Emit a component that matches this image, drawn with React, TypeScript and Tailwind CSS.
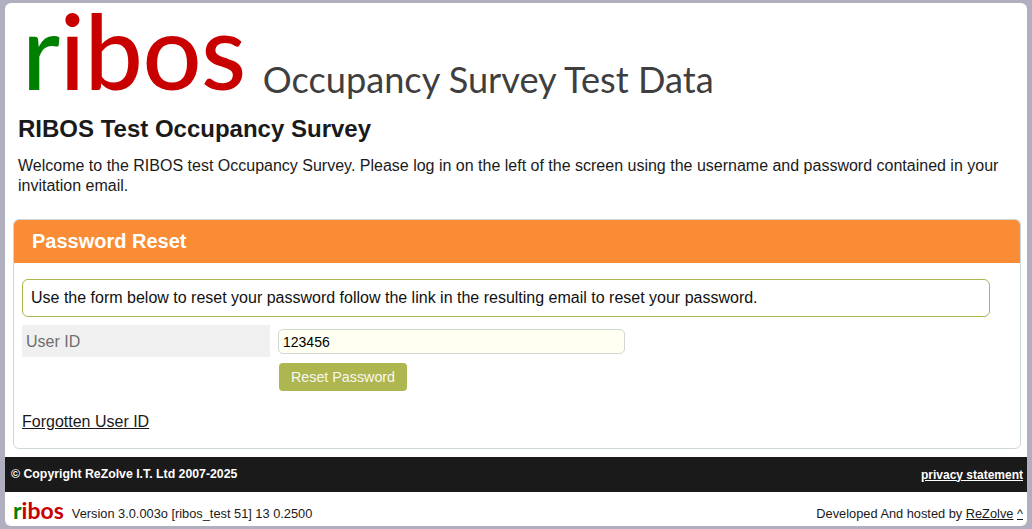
import React from 'react'

const sans = "font-['Liberation_Sans',Arial,sans-serif]"

const Logo = () => (
    <div className="flex h-[112px] shrink-0 items-baseline pl-[17px] font-['Lato','Open_Sans',sans-serif] whitespace-nowrap">
        <div className="text-[104px] leading-[93px] font-medium text-[#c80000] tracking-[-0.5px]">
            <span className="text-[#008000]">r</span>ibos
        </div>
        <div className="ml-[17px] translate-y-[3px] text-[36.2px] leading-none text-[#3f3f3f]">
            Occupancy Survey Test Data
        </div>
    </div>
)

const App = () => {
    return (
        <div className={`${sans} h-[529px] w-[1032px] overflow-hidden bg-[#b0afbf] px-[5px] pt-[3px] pb-[3px] text-[#1a1a1a]`}>
            <div className="flex h-full flex-col rounded-[6px] bg-white">
                <Logo />
                <div className="shrink-0 px-[13px]">
                    <h1 className="text-[24px] leading-[28px] font-bold text-[#1a1a1a]">
                        RIBOS Test Occupancy Survey
                    </h1>
                    <p className="mt-[13px] pr-[10px] text-[16px] leading-[20px]">
                        Welcome to the RIBOS test Occupancy Survey. Please log in on the left of the screen using the username and password contained in your invitation email.
                    </p>
                </div>
                <div className="mt-[23px] mr-[6px] ml-[8px] h-[230px] shrink-0 rounded-[6px] border border-[#cfd8d8]">
                    <div className="flex h-[43px] items-center rounded-t-[5px] bg-[#f98c35] pb-[2px] pl-[18px] text-[20px] font-bold text-white">
                        Password Reset
                    </div>
                    <div className="px-[8px] pt-[16px]">
                        <div className="flex h-[38px] w-[968px] items-center rounded-[6px] border border-[#aeb64f] px-[8px] text-[16px] text-[#111]">
                            Use the form below to reset your password follow the link in the resulting email to reset your password.
                        </div>
                        <div className="mt-[8px] flex items-start gap-[8px]">
                            <div className="flex h-[32px] w-[248px] items-center bg-[#f0f0f0] pt-[1px] pl-[4px] text-[16px] text-[#6e6e6e]">
                                User ID
                            </div>
                            <div className="pt-[4px]">
                                <input
                                    readOnly
                                    value="123456"
                                    className="block h-[25px] w-[347px] rounded-[5px] border border-[#d0d8d0] bg-[#fffff2] px-[4px] text-[14px] text-black outline-none"
                                />
                                <button className="mt-[9px] ml-[1px] block h-[28px] w-[128px] rounded-[4px] bg-[#aeb64f] pt-[1px] text-[14.3px] text-[#f8f8f0]">
                                    Reset Password
                                </button>
                            </div>
                        </div>
                        <a href="#" className="mt-[21px] inline-block text-[16px] leading-[20px] text-[#1a1a1a] underline">
                            Forgotten User ID
                        </a>
                    </div>
                </div>
                <div className="mt-[8px] flex h-[35px] shrink-0 items-center justify-between bg-[#1a1a1a] pr-[4px] pl-[6px] font-bold text-white">
                    <span className="text-[12.3px]">© Copyright ReZolve I.T. Ltd 2007-2025</span>
                    <a href="#" className="text-[12px] underline">privacy statement</a>
                </div>
                <div className="flex flex-1 items-center justify-between pt-[10px] pr-[4px] pl-[8px] text-[12.8px]">
                    <div className="flex items-center gap-[8px]">
                        <span className="-translate-y-[4px] font-['Lato','Open_Sans',sans-serif] text-[23px] leading-none font-bold text-[#c80000]">
                            <span className="text-[#008000]">r</span>ibos
                        </span>
                        <span>Version 3.0.003o [ribos_test 51] 13 0.2500</span>
                    </div>
                    <div>
                        Developed And hosted by <a href="#" className="underline">ReZolve</a> <a href="#" className="underline">^</a>
                    </div>
                </div>
            </div>
        </div>
    )
}

export default App
